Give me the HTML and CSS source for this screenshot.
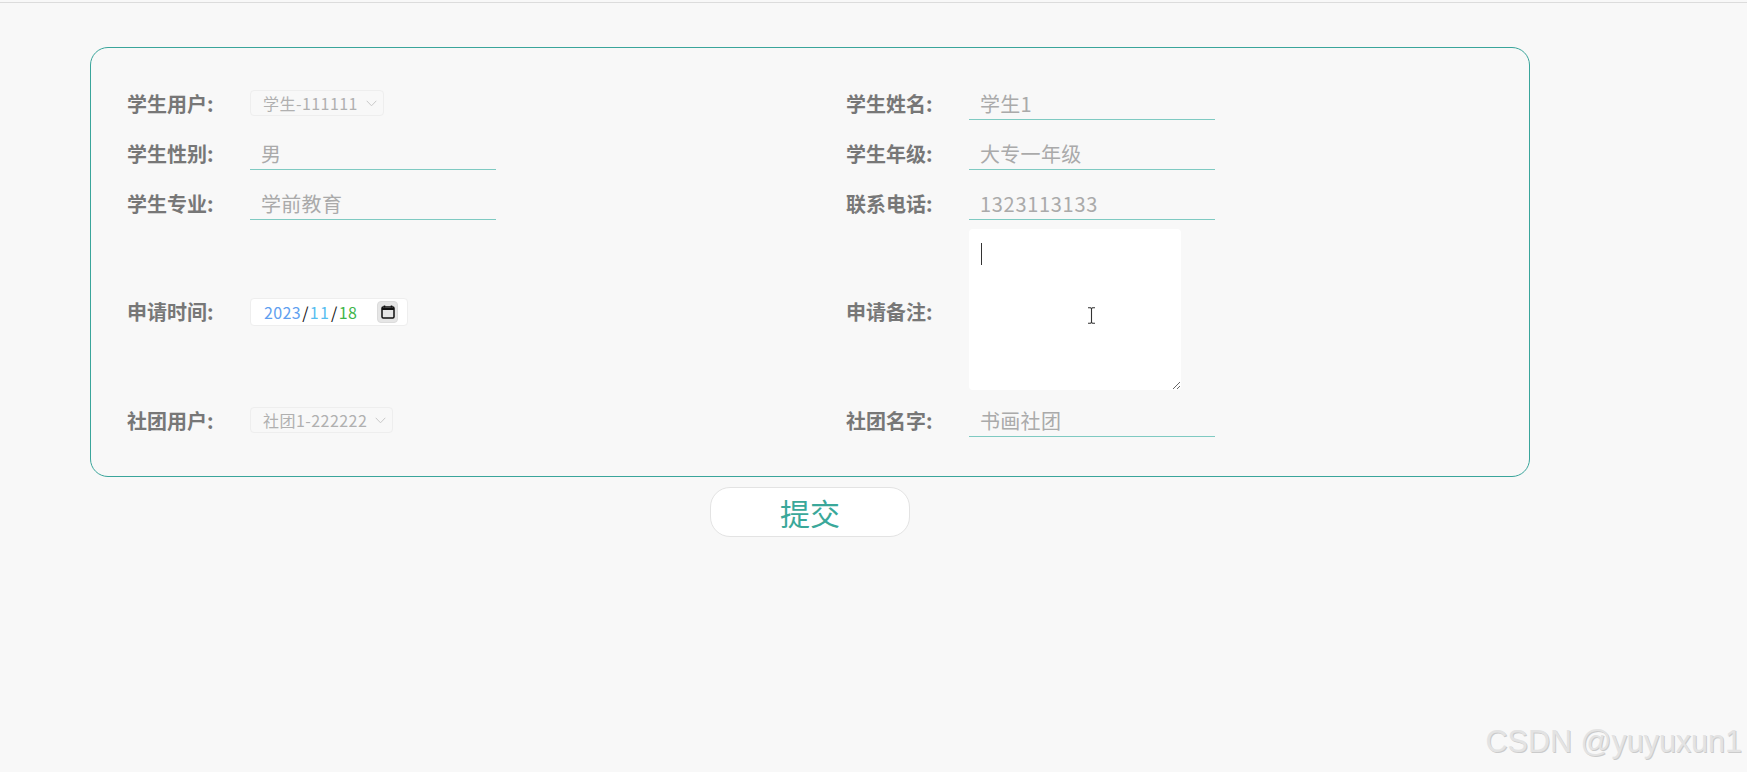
FILE: index.html
```html
<!DOCTYPE html>
<html lang="zh-CN">
<head>
    <meta charset="UTF-8">
    <meta name="viewport" content="width=device-width, initial-scale=1.0">
    <title>社团申请</title>
    <link rel="stylesheet" href="styles.css">
</head>
<body>
    <div class="top-rule"></div>
    <div class="page">
        <form class="apply-form">
            <div class="form-row">
                <span class="form-label">学生用户:</span>
                <div class="select-box select-student">
                    <span>学生-111111</span>
                    <svg class="chevron" width="11" height="7" viewBox="0 0 11 7"><path d="M0.7 0.8 5.5 5.8 10.3 0.8" fill="none" stroke="#c8c8c8" stroke-width="1"/></svg>
                </div>
            </div>
            <div class="form-row">
                <span class="form-label">学生姓名:</span>
                <div class="text-field">学生1</div>
            </div>

            <div class="form-row">
                <span class="form-label">学生性别:</span>
                <div class="text-field">男</div>
            </div>
            <div class="form-row">
                <span class="form-label">学生年级:</span>
                <div class="text-field">大专一年级</div>
            </div>

            <div class="form-row">
                <span class="form-label">学生专业:</span>
                <div class="text-field">学前教育</div>
            </div>
            <div class="form-row">
                <span class="form-label">联系电话:</span>
                <div class="text-field text-field-digits">1323113133</div>
            </div>

            <div class="form-row">
                <span class="form-label">申请时间:</span>
                <div class="date-box">
                    <span class="date-text"><span class="date-year">2023</span><span class="date-sep">/</span><span class="date-month">11</span><span class="date-sep">/</span><span class="date-day">18</span></span>
                    <span class="date-btn">
                        <svg width="14" height="14" viewBox="0 0 14 14"><path d="M3.5 0.5v2M10.5 0.5v2" stroke="#111" stroke-width="1.6" fill="none"/><rect x="1" y="2" width="12" height="11" rx="1.2" fill="none" stroke="#111" stroke-width="1.5"/><path d="M1 3h12v2H1z" fill="#111"/></svg>
                    </span>
                </div>
            </div>
            <div class="form-row form-row-note">
                <span class="form-label">申请备注:</span>
                <div class="note-wrap">
                    <textarea class="note-input"></textarea>
                    <span class="note-caret"></span>
                    <svg class="note-cursor" width="9" height="17" viewBox="0 0 9 17"><path d="M1 0.7h2.5l1 1 1-1H8M4.5 1.7v13.6M1 16.3h2.5l1-1 1 1H8" fill="none" stroke="#333" stroke-width="1.1"/></svg>
                </div>
            </div>

            <div class="form-row">
                <span class="form-label">社团用户:</span>
                <div class="select-box select-club">
                    <span>社团1-222222</span>
                    <svg class="chevron" width="11" height="7" viewBox="0 0 11 7"><path d="M0.7 0.8 5.5 5.8 10.3 0.8" fill="none" stroke="#c8c8c8" stroke-width="1"/></svg>
                </div>
            </div>
            <div class="form-row">
                <span class="form-label">社团名字:</span>
                <div class="text-field">书画社团</div>
            </div>
        </form>

        <button type="button" class="submit-btn">提交</button>
    </div>

    <div class="watermark">CSDN @yuyuxun1</div>
</body>
</html>
```

FILE: styles.css
```css
/* General Styles */
html, body {
    height: 100%;
}

body {
    font-family: "Noto Sans CJK SC", "Noto Sans", sans-serif;
    background-color: #f8f8f8;
    margin: 0;
    padding: 0;
    overflow: hidden;
}

.top-rule {
    height: 1px;
    margin-top: 2px;
    background-color: #dcdcdc;
}

.page {
    width: 1440px;
    margin-left: 90px;
    padding-top: 44px;
}

/* Form Card */
.apply-form {
    display: grid;
    grid-template-columns: 719px 1fr;
    grid-template-rows: 50px 50px 50px 167px 50px;
    padding: 30px 0 31px 36px;
    border: 1px solid #3aa59b;
    border-radius: 18px;
}

.form-row {
    display: flex;
    align-items: center;
}

.form-label {
    width: 123px;
    flex-shrink: 0;
    margin-top: 1px;
    font-size: 20px;
    line-height: 28px;
    font-weight: bold;
    color: #777;
}

.text-field {
    width: 235px;
    height: 30px;
    margin-top: 3px;
    padding-left: 11px;
    border-bottom: 1px solid #7fcac2;
    font-size: 20px;
    line-height: 30px;
    letter-spacing: 0.3px;
    color: #aaa;
}

.text-field-digits {
    letter-spacing: 0.7px;
}

/* Disabled selects */
.select-box {
    display: flex;
    align-items: center;
    justify-content: space-between;
    height: 26px;
    padding: 0 6px 0 12px;
    border: 1px solid #eeeeee;
    border-radius: 4px;
    box-sizing: border-box;
    font-size: 16px;
    letter-spacing: 0.45px;
    color: #b0b0b0;
}

.select-student {
    width: 134px;
}

.select-club {
    width: 143px;
}

/* Date picker */
.date-box {
    display: flex;
    align-items: center;
    justify-content: space-between;
    width: 158px;
    height: 28px;
    padding: 0 9px 0 13px;
    background-color: #fff;
    border: 1px solid #eeeeee;
    border-radius: 4px;
    box-sizing: border-box;
    font-size: 16px;
    letter-spacing: 0.4px;
    color: #111;
}

.date-sep {
    margin: 0 1px;
}

.date-year {
    color: #5f9ff0;
}

.date-month {
    color: #56bdf0;
    letter-spacing: 1.2px;
}

.date-day {
    color: #3fb54a;
    letter-spacing: 0.4px;
}

.date-btn {
    display: flex;
    align-items: center;
    justify-content: center;
    width: 21px;
    height: 22px;
    background-color: #e6e6e6;
    border: 1px solid #dcdcdc;
    border-radius: 4px;
    box-sizing: border-box;
}

/* Note textarea */
.form-row-note {
    align-items: flex-start;
}

.form-row-note .form-label {
    align-self: center;
}

.note-wrap {
    position: relative;
    width: 212px;
    height: 161px;
    margin-top: 1px;
}

.note-input {
    display: block;
    width: 100%;
    height: 100%;
    padding: 0;
    background-color: #fff;
    border: none;
    border-radius: 4px;
    outline: none;
    box-sizing: border-box;
}

.note-caret {
    position: absolute;
    left: 12px;
    top: 14px;
    width: 1px;
    height: 22px;
    background-color: #333;
}

.note-cursor {
    position: absolute;
    left: 118px;
    top: 78px;
}

/* Submit */
.submit-btn {
    display: block;
    width: 200px;
    height: 50px;
    margin: 10px auto 0;
    padding: 0;
    font-family: inherit;
    font-size: 30px;
    line-height: 46px;
    color: #3aa89a;
    background-color: #fff;
    border: 1px solid #e3e3e3;
    border-radius: 20px;
}

/* Watermark */
.watermark {
    position: absolute;
    right: 5px;
    bottom: 14px;
    font-family: "Liberation Sans", Arial, sans-serif;
    font-size: 30.5px;
    line-height: 34px;
    color: #e3e3e3;
    text-shadow: 1px 1px 0 #cbcbcb;
}
```
